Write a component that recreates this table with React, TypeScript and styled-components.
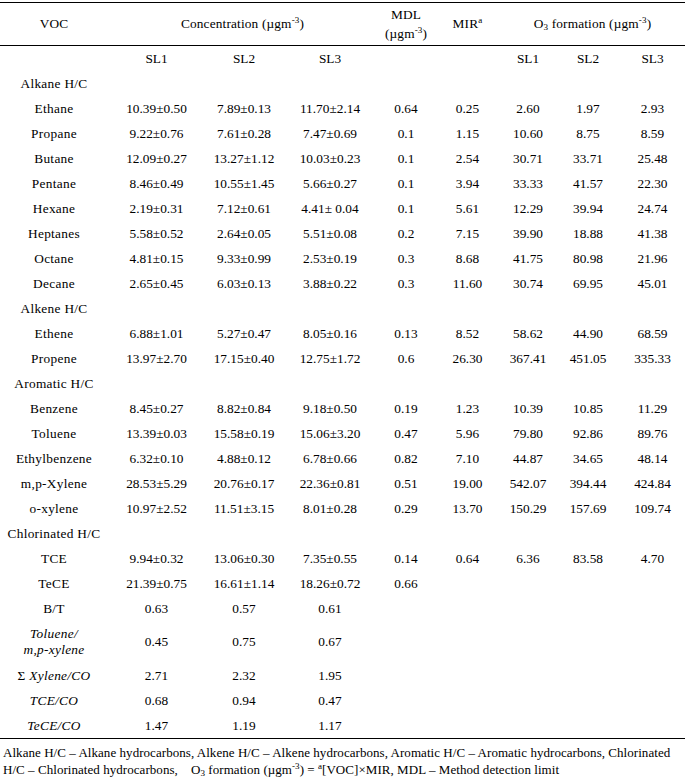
import React from "react";
import styled, { createGlobalStyle } from "styled-components";

const serif = `"Liberation Serif", "Times New Roman", "DejaVu Serif", serif`;

const GlobalStyle = createGlobalStyle`
  * { box-sizing: border-box; }
  html, body { margin: 0; padding: 0; background: #ffffff; }
  body {
    font-family: ${serif};
    color: #000000;
  }
`;

const Page = styled.div`
  width: 685px;
  padding-top: 2px;
  font-family: ${serif};
`;

const Table = styled.table`
  width: 685px;
  table-layout: fixed;
  border-collapse: separate;
  border-spacing: 0;
  border-top: 1px solid #000;
  border-bottom: 1px solid #000;
  font-family: ${serif};
  font-size: 13.33px;
  line-height: 16px;
  color: #000;
`;

const HeadCell = styled.th<{ $tall?: boolean }>`
  height: 43px;
  padding: 0;
  font-family: ${serif};
  font-weight: normal;
  text-align: center;
  vertical-align: middle;
  letter-spacing: 0.15px;
  border-bottom: 1px solid #000;
  line-height: ${(p) => (p.$tall ? "19px" : "16px")};
`;

const Row = styled.tr<{ $double?: boolean }>`
  height: ${(p) => (p.$double ? "42px" : "25px")};
`;

const Cell = styled.td<{ $italic?: boolean; $label?: boolean }>`
  padding: 0;
  font-family: ${serif};
  text-align: center;
  vertical-align: middle;
  white-space: nowrap;
  letter-spacing: ${(p) => (p.$label ? "0.3px" : "0")};
  font-style: ${(p) => (p.$italic ? "italic" : "normal")};
`;

const Sup = styled.sup`
  font-size: 9px;
  line-height: 0;
  vertical-align: 5px;
`;

const Sub = styled.sub`
  font-size: 9px;
  line-height: 0;
  vertical-align: -2px;
`;

const Upright = styled.span`
  font-style: normal;
`;

const Footer = styled.div`
  padding: 5px 0 0 3px;
  font-family: ${serif};
  font-size: 13px;
  line-height: 17px;
  letter-spacing: 0.05px;
  white-space: nowrap;
`;

const colWidths = [108, 97, 78, 94, 58, 65, 56, 64, 65];

const Unit = () => (
  <>
    (µgm<Sup>-3</Sup>)
  </>
);

type DataRow = [string, ...string[]];

const groups: { title: string; rows: DataRow[] }[] = [
  {
    title: "Alkane H/C",
    rows: [
      ["Ethane", "10.39±0.50", "7.89±0.13", "11.70±2.14", "0.64", "0.25", "2.60", "1.97", "2.93"],
      ["Propane", "9.22±0.76", "7.61±0.28", "7.47±0.69", "0.1", "1.15", "10.60", "8.75", "8.59"],
      ["Butane", "12.09±0.27", "13.27±1.12", "10.03±0.23", "0.1", "2.54", "30.71", "33.71", "25.48"],
      ["Pentane", "8.46±0.49", "10.55±1.45", "5.66±0.27", "0.1", "3.94", "33.33", "41.57", "22.30"],
      ["Hexane", "2.19±0.31", "7.12±0.61", "4.41± 0.04", "0.1", "5.61", "12.29", "39.94", "24.74"],
      ["Heptanes", "5.58±0.52", "2.64±0.05", "5.51±0.08", "0.2", "7.15", "39.90", "18.88", "41.38"],
      ["Octane", "4.81±0.15", "9.33±0.99", "2.53±0.19", "0.3", "8.68", "41.75", "80.98", "21.96"],
      ["Decane", "2.65±0.45", "6.03±0.13", "3.88±0.22", "0.3", "11.60", "30.74", "69.95", "45.01"],
    ],
  },
  {
    title: "Alkene H/C",
    rows: [
      ["Ethene", "6.88±1.01", "5.27±0.47", "8.05±0.16", "0.13", "8.52", "58.62", "44.90", "68.59"],
      ["Propene", "13.97±2.70", "17.15±0.40", "12.75±1.72", "0.6", "26.30", "367.41", "451.05", "335.33"],
    ],
  },
  {
    title: "Aromatic H/C",
    rows: [
      ["Benzene", "8.45±0.27", "8.82±0.84", "9.18±0.50", "0.19", "1.23", "10.39", "10.85", "11.29"],
      ["Toluene", "13.39±0.03", "15.58±0.19", "15.06±3.20", "0.47", "5.96", "79.80", "92.86", "89.76"],
      ["Ethylbenzene", "6.32±0.10", "4.88±0.12", "6.78±0.66", "0.82", "7.10", "44.87", "34.65", "48.14"],
      ["m,p-Xylene", "28.53±5.29", "20.76±0.17", "22.36±0.81", "0.51", "19.00", "542.07", "394.44", "424.84"],
      ["o-xylene", "10.97±2.52", "11.51±3.15", "8.01±0.28", "0.29", "13.70", "150.29", "157.69", "109.74"],
    ],
  },
  {
    title: "Chlorinated H/C",
    rows: [
      ["TCE", "9.94±0.32", "13.06±0.30", "7.35±0.55", "0.14", "0.64", "6.36", "83.58", "4.70"],
      ["TeCE", "21.39±0.75", "16.61±1.14", "18.26±0.72", "0.66", "", "", "", ""],
      ["B/T", "0.63", "0.57", "0.61", "", "", "", "", ""],
    ],
  },
];

const ratioRows: { label: React.ReactNode; values: string[]; double?: boolean }[] = [
  {
    label: (
      <>
        Toluene/
        <br />
        m,p-xylene
      </>
    ),
    values: ["0.45", "0.75", "0.67"],
    double: true,
  },
  {
    label: (
      <>
        <Upright>Σ</Upright> Xylene/CO
      </>
    ),
    values: ["2.71", "2.32", "1.95"],
  },
  { label: "TCE/CO", values: ["0.68", "0.94", "0.47"] },
  { label: "TeCE/CO", values: ["1.47", "1.19", "1.17"] },
];

const Empty = ({ n }: { n: number }) => (
  <>
    {Array.from({ length: n }).map((_, i) => (
      <Cell key={i} />
    ))}
  </>
);

export default function App() {
  return (
    <Page>
      <GlobalStyle />
      <Table>
        <colgroup>
          {colWidths.map((w, i) => (
            <col key={i} style={{ width: w }} />
          ))}
        </colgroup>
        <thead>
          <tr>
            <HeadCell>VOC</HeadCell>
            <HeadCell colSpan={3}>
              Concentration <Unit />
            </HeadCell>
            <HeadCell $tall>
              MDL
              <br />
              <Unit />
            </HeadCell>
            <HeadCell>
              MIR<Sup>a</Sup>
            </HeadCell>
            <HeadCell colSpan={3}>
              O<Sub>3</Sub> formation <Unit />
            </HeadCell>
          </tr>
        </thead>
        <tbody>
          <Row>
            <Cell />
            <Cell>SL1</Cell>
            <Cell>SL2</Cell>
            <Cell>SL3</Cell>
            <Cell />
            <Cell />
            <Cell>SL1</Cell>
            <Cell>SL2</Cell>
            <Cell>SL3</Cell>
          </Row>
          {groups.map((g) => (
            <React.Fragment key={g.title}>
              <Row>
                <Cell $label>{g.title}</Cell>
                <Empty n={8} />
              </Row>
              {g.rows.map((r) => (
                <Row key={r[0]}>
                  {r.map((v, i) => (
                    <Cell key={i} $label={i === 0}>
                      {v}
                    </Cell>
                  ))}
                </Row>
              ))}
            </React.Fragment>
          ))}
          {ratioRows.map((r, idx) => (
            <Row key={idx} $double={r.double}>
              <Cell $italic $label>
                {r.label}
              </Cell>
              {r.values.map((v, i) => (
                <Cell key={i}>{v}</Cell>
              ))}
              <Empty n={5} />
            </Row>
          ))}
        </tbody>
      </Table>
      <Footer>
        Alkane H/C – Alkane hydrocarbons, Alkene H/C – Alkene hydrocarbons, Aromatic H/C – Aromatic
        hydrocarbons, Chlorinated
        <br />
        H/C – Chlorinated hydrocarbons,&nbsp;&nbsp;&nbsp; O<Sub>3</Sub> formation (µgm<Sup>-3</Sup>) ={" "}
        <Sup>a</Sup>[VOC]×MIR, MDL – Method detection limit
      </Footer>
    </Page>
  );
}
